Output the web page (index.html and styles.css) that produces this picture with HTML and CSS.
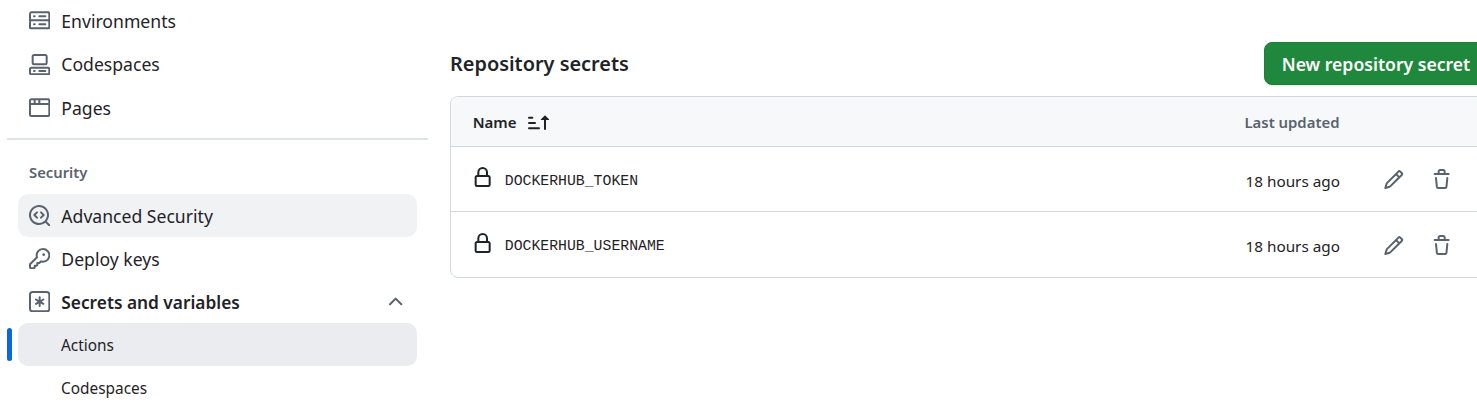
FILE: index.html
```html
<!DOCTYPE html>
<html lang="en">
<head>
<meta charset="utf-8">
<title>Actions secrets</title>
<link rel="stylesheet" href="styles.css">
</head>
<body>
<div class="page">
  <nav class="sidebar">
    <ul class="nav first">
      <li class="item"><svg class="icon" viewBox="0 0 16 16"><path d="M1.75 1h12.5c.966 0 1.75.784 1.75 1.75v4c0 .372-.116.717-.314 1 .198.283.314.628.314 1v4a1.75 1.75 0 0 1-1.75 1.75H1.75A1.75 1.75 0 0 1 0 13.75v-4c0-.372.116-.717.314-1a1.739 1.739 0 0 1-.314-1v-4C0 1.784.784 1 1.75 1ZM1.5 2.75v4c0 .138.112.25.25.25h12.5a.25.25 0 0 0 .25-.25v-4a.25.25 0 0 0-.25-.25H1.75a.25.25 0 0 0-.25.25Zm.25 5.75a.25.25 0 0 0-.25.25v4c0 .138.112.25.25.25h12.5a.25.25 0 0 0 .25-.25v-4a.25.25 0 0 0-.25-.25ZM7 4.75A.75.75 0 0 1 7.75 4h4.5a.75.75 0 0 1 0 1.5h-4.5A.75.75 0 0 1 7 4.75ZM7.75 10h4.5a.75.75 0 0 1 0 1.5h-4.5a.75.75 0 0 1 0-1.5ZM3 4.75A.75.75 0 0 1 3.75 4h.5a.75.75 0 0 1 0 1.5h-.5A.75.75 0 0 1 3 4.75ZM3.75 10h.5a.75.75 0 0 1 0 1.5h-.5a.75.75 0 0 1 0-1.5Z"/></svg><span>Environments</span></li>
      <li class="item"><svg class="icon" viewBox="0 0 16 16"><path d="M0 11.25c0-.966.784-1.75 1.75-1.75h12.5c.966 0 1.75.784 1.75 1.75v3A1.75 1.75 0 0 1 14.25 16H1.75A1.75 1.75 0 0 1 0 14.25Zm2-9.5C2 .784 2.784 0 3.75 0h8.5C13.216 0 14 .784 14 1.75v5a1.75 1.75 0 0 1-1.75 1.75h-8.5A1.75 1.75 0 0 1 2 6.75Zm1.75-.25a.25.25 0 0 0-.25.25v5c0 .138.112.25.25.25h8.5a.25.25 0 0 0 .25-.25v-5a.25.25 0 0 0-.25-.25Zm-2 9.5a.25.25 0 0 0-.25.25v3c0 .138.112.25.25.25h12.5a.25.25 0 0 0 .25-.25v-3a.25.25 0 0 0-.25-.25Z"/><path d="M7 12.75a.75.75 0 0 1 .75-.75h4.5a.75.75 0 0 1 0 1.5h-4.5a.75.75 0 0 1-.75-.75Zm-4 0a.75.75 0 0 1 .75-.75h.5a.75.75 0 0 1 0 1.5h-.5a.75.75 0 0 1-.75-.75Z"/></svg><span>Codespaces</span></li>
      <li class="item"><svg class="icon" viewBox="0 0 16 16"><path d="M0 2.75C0 1.784.784 1 1.75 1h12.5c.966 0 1.75.784 1.75 1.75v10.5A1.75 1.75 0 0 1 14.25 15H1.75A1.75 1.75 0 0 1 0 13.25ZM14.5 6h-13v7.25c0 .138.112.25.25.25h12.5a.25.25 0 0 0 .25-.25Zm-6-3.5v2h6V2.75a.25.25 0 0 0-.25-.25ZM5 2.5v2h2v-2Zm-3.25 0a.25.25 0 0 0-.25.25V4.5h2v-2Z"/></svg><span>Pages</span></li>
    </ul>
    <hr class="divider">
    <h2 class="group">Security</h2>
    <ul class="nav second">
      <li class="item hovered"><svg class="icon" viewBox="0 0 16 16"><path d="M8.47 4.97a.75.75 0 0 0 0 1.06L9.94 7.5 8.47 8.97a.75.75 0 1 0 1.06 1.06l2-2a.75.75 0 0 0 0-1.06l-2-2a.75.75 0 0 0-1.06 0ZM6.53 6.03a.75.75 0 0 0-1.06-1.06l-2 2a.75.75 0 0 0 0 1.06l2 2a.75.75 0 1 0 1.06-1.06L5.06 7.5l1.47-1.47Z"/><path d="M12.246 13.307a7.501 7.501 0 1 1 1.06-1.06l2.474 2.473a.749.749 0 0 1-.326 1.275.749.749 0 0 1-.734-.215ZM1.5 7.5a6.002 6.002 0 0 0 3.608 5.504 6.002 6.002 0 0 0 6.486-1.117.748.748 0 0 1 .292-.293A6 6 0 1 0 1.5 7.5Z"/></svg><span>Advanced Security</span></li>
      <li class="item"><svg class="icon" viewBox="0 0 16 16"><path d="M10.5 0a5.499 5.499 0 1 1-1.288 10.848l-.932.932a.749.749 0 0 1-.53.22H7v.75a.749.749 0 0 1-.22.53l-.5.5a.749.749 0 0 1-.53.22H5v.75a.749.749 0 0 1-.22.53l-.5.5a.749.749 0 0 1-.53.22h-2A1.75 1.75 0 0 1 0 14.25v-2c0-.199.079-.389.22-.53l4.932-4.932A5.5 5.5 0 0 1 10.5 0Zm-4 5.5c-.001.431.069.86.205 1.269a.75.75 0 0 1-.181.768L1.5 12.56v1.69c0 .138.112.25.25.25h1.69l.06-.06v-1.19a.75.75 0 0 1 .75-.75h1.19l.06-.06v-1.19a.75.75 0 0 1 .75-.75h1.19l1.023-1.025a.75.75 0 0 1 .768-.18A4 4 0 1 0 6.5 5.5ZM11 6a1 1 0 1 1 0-2 1 1 0 0 1 0 2Z"/></svg><span>Deploy keys</span></li>
      <li class="item parent"><svg class="icon" viewBox="0 0 16 16"><path d="M0 2.75A2.75 2.75 0 0 1 2.75 0h10.5A2.75 2.75 0 0 1 16 2.75v10.5A2.75 2.75 0 0 1 13.25 16H2.75A2.75 2.75 0 0 1 0 13.25ZM2.75 1.5c-.69 0-1.25.56-1.25 1.25v10.5c0 .69.56 1.25 1.25 1.25h10.5c.69 0 1.25-.56 1.25-1.25V2.75c0-.69-.56-1.25-1.25-1.25Z"/><path d="M8 4a.75.75 0 0 1 .75.75V6.7l1.69-.975a.75.75 0 0 1 .75 1.3L9.5 8l1.69.976a.75.75 0 0 1-.75 1.298L8.75 9.3v1.951a.75.75 0 0 1-1.5 0V9.299l-1.69.976a.75.75 0 0 1-.75-1.3L6.5 8l-1.69-.975a.75.75 0 0 1 .75-1.3l1.69.976V4.75A.75.75 0 0 1 8 4Z"/></svg><span class="grow">Secrets and variables</span><svg class="icon" viewBox="0 0 16 16"><path d="M3.22 10.53a.749.749 0 0 1 0-1.06l4.25-4.25a.749.749 0 0 1 1.06 0l4.25 4.25a.749.749 0 0 1-.326 1.275.749.749 0 0 1-.734-.215L8 6.811 4.28 10.53a.749.749 0 0 1-1.06 0Z"/></svg></li>
      <li class="item sub current"><span>Actions</span></li>
      <li class="item sub"><span>Codespaces</span></li>
    </ul>
  </nav>
  <main class="main">
    <div class="head">
      <h3 class="title">Repository secrets</h3>
      <button class="primary" type="button">New repository secret</button>
    </div>
    <div class="box">
      <div class="row header">
        <div class="name-col"><span class="name-label">Name</span><svg class="icon dark" viewBox="0 0 16 16"><path d="m12.927 2.573 3 3A.25.25 0 0 1 15.75 6H13.5v6.75a.75.75 0 0 1-1.5 0V6H9.75a.25.25 0 0 1-.177-.427l3-3a.25.25 0 0 1 .354 0ZM0 12.25a.75.75 0 0 1 .75-.75h7.5a.75.75 0 0 1 0 1.5H.75a.75.75 0 0 1-.75-.75Zm0-4a.75.75 0 0 1 .75-.75h4.5a.75.75 0 0 1 0 1.5H.75A.75.75 0 0 1 0 8.25Zm0-4a.75.75 0 0 1 .75-.75h2.5a.75.75 0 0 1 0 1.5H.75A.75.75 0 0 1 0 4.25Z"/></svg></div>
        <div class="updated-col head-updated">Last updated</div>
        <div class="actions-col"></div>
      </div>
      <div class="row">
        <div class="name-col"><svg class="icon dark lock" viewBox="0 0 16 16"><path d="M4 4a4 4 0 0 1 8 0v2h.25c.966 0 1.75.784 1.75 1.75v5.5A1.75 1.75 0 0 1 12.25 15h-8.5A1.75 1.75 0 0 1 2 13.25v-5.5C2 6.784 2.784 6 3.75 6H4Zm8.25 3.5h-8.5a.25.25 0 0 0-.25.25v5.5c0 .138.112.25.25.25h8.5a.25.25 0 0 0 .25-.25v-5.5a.25.25 0 0 0-.25-.25ZM10.5 6V4a2.5 2.5 0 1 0-5 0v2Z"/></svg><code class="secret">DOCKERHUB_TOKEN</code></div>
        <div class="updated-col">18 hours ago</div>
        <div class="actions-col"><svg class="icon" viewBox="0 0 16 16"><path d="M11.013 1.427a1.75 1.75 0 0 1 2.474 0l1.086 1.086a1.75 1.75 0 0 1 0 2.474l-8.61 8.61c-.21.21-.47.364-.756.445l-3.251.93a.75.75 0 0 1-.927-.928l.929-3.25c.081-.286.235-.547.445-.758l8.61-8.61Zm.176 4.823L9.75 4.81l-6.286 6.287a.253.253 0 0 0-.064.108l-.558 1.953 1.953-.558a.253.253 0 0 0 .108-.064Zm1.238-3.763a.25.25 0 0 0-.354 0L10.811 3.75l1.439 1.44 1.263-1.263a.25.25 0 0 0 0-.354Z"/></svg><svg class="icon" viewBox="0 0 16 16"><path d="M11 1.75V3h2.25a.75.75 0 0 1 0 1.5H2.75a.75.75 0 0 1 0-1.5H5V1.75C5 .784 5.784 0 6.75 0h2.5C10.216 0 11 .784 11 1.75ZM4.496 6.675l.66 6.6a.25.25 0 0 0 .249.225h5.19a.25.25 0 0 0 .249-.225l.66-6.6a.75.75 0 0 1 1.492.149l-.66 6.6A1.748 1.748 0 0 1 10.595 15h-5.19a1.75 1.75 0 0 1-1.741-1.575l-.66-6.6a.75.75 0 1 1 1.492-.15ZM6.5 1.75V3h3V1.75a.25.25 0 0 0-.25-.25h-2.5a.25.25 0 0 0-.25.25Z"/></svg></div>
      </div>
      <div class="row">
        <div class="name-col"><svg class="icon dark lock" viewBox="0 0 16 16"><path d="M4 4a4 4 0 0 1 8 0v2h.25c.966 0 1.75.784 1.75 1.75v5.5A1.75 1.75 0 0 1 12.25 15h-8.5A1.75 1.75 0 0 1 2 13.25v-5.5C2 6.784 2.784 6 3.75 6H4Zm8.25 3.5h-8.5a.25.25 0 0 0-.25.25v5.5c0 .138.112.25.25.25h8.5a.25.25 0 0 0 .25-.25v-5.5a.25.25 0 0 0-.25-.25ZM10.5 6V4a2.5 2.5 0 1 0-5 0v2Z"/></svg><code class="secret">DOCKERHUB_USERNAME</code></div>
        <div class="updated-col">18 hours ago</div>
        <div class="actions-col"><svg class="icon" viewBox="0 0 16 16"><path d="M11.013 1.427a1.75 1.75 0 0 1 2.474 0l1.086 1.086a1.75 1.75 0 0 1 0 2.474l-8.61 8.61c-.21.21-.47.364-.756.445l-3.251.93a.75.75 0 0 1-.927-.928l.929-3.25c.081-.286.235-.547.445-.758l8.61-8.61Zm.176 4.823L9.75 4.81l-6.286 6.287a.253.253 0 0 0-.064.108l-.558 1.953 1.953-.558a.253.253 0 0 0 .108-.064Zm1.238-3.763a.25.25 0 0 0-.354 0L10.811 3.75l1.439 1.44 1.263-1.263a.25.25 0 0 0 0-.354Z"/></svg><svg class="icon" viewBox="0 0 16 16"><path d="M11 1.75V3h2.25a.75.75 0 0 1 0 1.5H2.75a.75.75 0 0 1 0-1.5H5V1.75C5 .784 5.784 0 6.75 0h2.5C10.216 0 11 .784 11 1.75ZM4.496 6.675l.66 6.6a.25.25 0 0 0 .249.225h5.19a.25.25 0 0 0 .249-.225l.66-6.6a.75.75 0 0 1 1.492.149l-.66 6.6A1.748 1.748 0 0 1 10.595 15h-5.19a1.75 1.75 0 0 1-1.741-1.575l-.66-6.6a.75.75 0 1 1 1.492-.15ZM6.5 1.75V3h3V1.75a.25.25 0 0 0-.25-.25h-2.5a.25.25 0 0 0-.25.25Z"/></svg></div>
      </div>
    </div>
  </main>
</div>
</body>
</html>
```
FILE: styles.css
```css
* { box-sizing: border-box; }
html, body {
  margin: 0;
  height: 409px;
  overflow: hidden;
  background: #fff;
}
body {
  font-family: "Noto Sans", "Open Sans", sans-serif;
  font-size: 17.6px;
  color: #1f2328;
}
.page {
  display: flex;
  width: 1488px;
  padding-left: 7px;
  gap: 22px;
}
.sidebar { width: 421px; flex: none; }
.nav {
  list-style: none;
  margin: 0;
  padding: 0 11px;
}
.nav.first { margin-top: -.6px; }
.item {
  position: relative;
  display: flex;
  align-items: center;
  gap: 11.5px;
  height: 43.3px;
  padding: 0 11px 0 10.5px;
  border-radius: 10px;
}
.second .item { height: 43px; }
.second .item span { margin-top: 2px; }
.icon {
  width: 21.33px;
  height: 21.33px;
  flex: none;
  fill: #59636e;
}
.icon.dark { fill: #1f2328; }
.hovered { background: #f0f2f4; }
.parent { font-weight: 600; font-size: 17.3px; }
.grow { flex: 1; }
.item.sub {
  padding-left: 43px;
  font-size: 15.4px;
}
.current { background: #ebecef; }
.current::before {
  content: "";
  position: absolute;
  left: -11px;
  top: 5px;
  bottom: 5px;
  width: 5px;
  border-radius: 3px;
  background: #0969da;
}
.divider {
  height: 2px;
  border: 0;
  margin: 8.6px 0 0;
  background: #dfe3e8;
}
.group {
  margin: 22px 0 12px 22px;
  font-size: 14.8px;
  font-weight: 600;
  line-height: 20px;
  color: #59636e;
}
.main { flex: 1; min-width: 0; padding-top: 42px; }
.head {
  display: flex;
  align-items: center;
  justify-content: space-between;
}
.title {
  margin: 0;
  font-size: 19.9px;
  font-weight: 600;
}
.primary {
  height: 43px;
  width: 224px;
  padding: 0;
  border: 1px solid #1a7f37;
  border-radius: 8px;
  background: #1f883d;
  color: #fff;
  font: inherit;
  font-weight: 600;
  box-shadow: 0 1px 2px rgba(31, 35, 40, .12);
}
.box {
  margin-top: 11px;
  border: 1px solid #d1d9e0;
  border-radius: 8px;
  overflow: hidden;
}
.row {
  display: flex;
  align-items: center;
  height: 65.3px;
  padding: 2px 0 0 21px;
  border-top: 1px solid #d1d9e0;
}
.row.header {
  height: 49px;
  border-top: 0;
  background: #f6f8fa;
  font-size: 15px;
  font-weight: 600;
}
.name-col {
  flex: 1;
  display: flex;
  align-items: center;
  gap: 11.5px;
}
.name-label { margin: 0 0 0 .7px; }
.lock { margin-top: -4px; }
.secret {
  font-family: "Liberation Mono", monospace;
  font-size: 14.8px;
  margin-top: 2px;
}
.updated-col {
  font-size: 15.3px;
  text-align: right;
  margin-top: 2px;
}
.head-updated { color: #59636e; font-size: 14.9px; margin-top: -2px; margin-right: .5px; }
.actions-col {
  width: 147px;
  flex: none;
  display: flex;
  gap: 27px;
  padding-left: 43px;
}
```
